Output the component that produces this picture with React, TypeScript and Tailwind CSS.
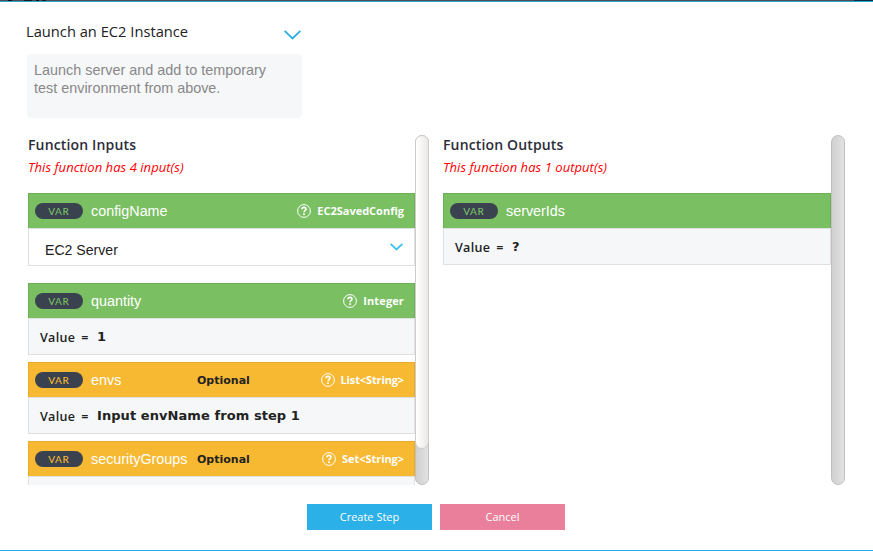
import React from "react";

const sans = "font-['Open_Sans','Noto_Sans',sans-serif]";
const helv = "font-['Liberation_Sans',Arial,sans-serif]";
const deja = "font-['DejaVu_Sans',Verdana,sans-serif]";

function HelpIcon() {
  return (
    <svg width="14" height="14" viewBox="0 0 14 14" fill="none" stroke="white" className="shrink-0">
      <circle cx="7" cy="7" r="6.4" strokeWidth="1" />
      <path d="M4.9 5.3C5 3.9 6 3.4 7 3.4C8.2 3.4 9 4.1 9 5.1C9 6.5 7 6.6 7 8.3" strokeWidth="1.6" />
      <path d="M7 9.2V10.9" strokeWidth="1.7" />
    </svg>
  );
}

function Chevron({ width, height, stroke }: { width: number; height: number; stroke: string }) {
  return (
    <svg width={width} height={height} viewBox={`0 0 ${width} ${height}`} fill="none" stroke={stroke} strokeWidth="1.8">
      <path d={`M0.6 0.8L${width / 2} ${height - 1.6}L${width - 0.6} 0.8`} />
    </svg>
  );
}

type VarProps = {
  name: string;
  type?: string;
  typeTracking?: string;
  optional?: boolean;
  children?: React.ReactNode;
};

function VarCard({ name, type, typeTracking = "", optional, children }: VarProps) {
  const header = optional ? "bg-[#f8b932] border-[#e8ab2c]" : "bg-[#7ac063] border-[#6db057]";
  const label = optional ? "text-[#f8b932]" : "text-[#7ac063]";
  return (
    <div className="shrink-0">
      <div className={`flex h-[35px] items-center border border-b-0 pl-[5.5px] pr-[10px] ${header}`}>
        <div className={`flex h-4 w-[48.5px] shrink-0 items-center justify-center rounded-full bg-[#3a414f] font-['Lato',sans-serif] text-[10px] font-medium leading-none tracking-[0.5px] ${label}`}>
          VAR
        </div>
        <div className={`ml-2 w-[106px] whitespace-nowrap text-[14.35px] leading-5 text-white ${helv}`}>{name}</div>
        {optional && <div className={`pt-[2px] text-[11px] font-bold leading-4 text-[#222] ${deja}`}>Optional</div>}
        {type && (
          <div className={`ml-auto flex items-center gap-[6px] text-[11px] font-bold text-white ${sans}`}>
            <HelpIcon />
            <span className={typeTracking}>{type}</span>
          </div>
        )}
      </div>
      {children}
    </div>
  );
}

function Value({ text }: { text: string }) {
  return (
    <div className="flex h-[37px] items-center border border-[#dfe0e2] bg-[#f5f7f9] pl-[11px] text-[#222]">
      <span className={`flex w-[57px] gap-[6px] pt-[2px] text-[12.5px] font-semibold leading-4 tracking-[0.3px] ${sans}`}>
        <span>Value</span>
        <span>=</span>
      </span>
      <span className={`text-[13px] font-bold leading-5 tracking-[0.07px] ${deja}`}>{text}</span>
    </div>
  );
}

function Heading({ title, note }: { title: string; note: string }) {
  return (
    <div className={`h-[58px] shrink-0 ${sans}`}>
      <div className="h-5 text-[14px] font-semibold leading-[19px] tracking-[0.15px] text-[#2b2d38]">{title}</div>
      <div className="mt-[3px] text-[13px] italic leading-[19px] tracking-[0.05px] text-[#ff0000]">{note}</div>
    </div>
  );
}

function Scrollbar({ thumb }: { thumb?: boolean }) {
  return (
    <div className="h-[350px] w-[14px] shrink-0 rounded-full border border-[#c3bfbc] bg-linear-to-r from-[#d0d0d0] to-[#e2e2e2]">
      {thumb && (
        <div className="-ml-px -mt-px h-[314px] w-[14px] rounded-full border border-[#cfcbc8] bg-linear-to-r from-white to-[#ebe9e7]" />
      )}
    </div>
  );
}

export default function App() {
  return (
    <div className="flex h-[551px] w-[873px] flex-col overflow-hidden border-b border-[#20b0e6] bg-white">
      <div className="flex h-[2px] shrink-0 border-b border-[#2ba5cf] bg-[#4c4c50]">
        <div className="ml-2 w-1 bg-[#111]" />
        <div className="ml-3 w-2 bg-[#1c1c1c]" />
        <div className="ml-1 w-[3px] bg-[#111]" />
        <div className="ml-[3px] w-1 bg-[#1c1c1c]" />
        <div className="ml-auto w-[19px] bg-[#082f43]" />
      </div>
      <div className="h-[133px] shrink-0 pl-[27px] pt-5">
        <div className="flex h-8 w-[275px] justify-between">
          <div className={`-ml-px text-[14.7px] leading-[18px] text-[#222] ${sans}`}>Launch an EC2 Instance</div>
          <div className="mr-[1.5px] mt-2">
            <Chevron width={17} height={10} stroke="#2bade6" />
          </div>
        </div>
        <div className={`h-[64px] w-[275px] rounded bg-[#f5f7f9] px-[7px] pt-[7px] text-[14.4px] leading-[18px] text-[#888] ${helv}`}>
          Launch server and add to temporary<br />test environment from above.
        </div>
      </div>
      <div className="flex h-[350px] shrink-0 pl-7">
        <div className="flex h-[350px] w-[387px] flex-col overflow-hidden">
          <Heading title="Function Inputs" note="This function has 4 input(s)" />
          <VarCard name="configName" type="EC2SavedConfig">
            <div className="mb-[17px] flex h-[38px] items-center justify-between border border-[#dfe0e2] bg-white pl-4 pr-[11px]">
              <div className={`pt-[5px] text-[14.1px] leading-[18px] text-[#222] ${helv}`}>EC2 Server</div>
              <Chevron width={13} height={8} stroke="#3bc3f0" />
            </div>
          </VarCard>
          <VarCard name="quantity" type="Integer" typeTracking="tracking-[0.13px]">
            <Value text="1" />
          </VarCard>
          <div className="h-[7px] shrink-0" />
          <VarCard name="envs" type="List<String>" typeTracking="tracking-[-0.13px]" optional>
            <Value text="Input envName from step 1" />
          </VarCard>
          <div className="h-[7px] shrink-0" />
          <VarCard name="securityGroups" type="Set<String>" typeTracking="tracking-[-0.06px]" optional>
            <div className="h-[9px] border border-b-0 border-[#dfe0e2] bg-[#f5f7f9]" />
          </VarCard>
        </div>
        <Scrollbar thumb />
        <div className="ml-[14px] h-[350px] w-[388px]">
          <Heading title="Function Outputs" note="This function has 1 output(s)" />
          <VarCard name="serverIds">
            <Value text="?" />
          </VarCard>
        </div>
        <Scrollbar />
      </div>
      <div className={`flex gap-2 pl-[307px] pt-[19px] text-[11px] text-white ${sans}`}>
        <button className="h-[26px] w-[125px] bg-[#2bb0e8]">Create Step</button>
        <button className="h-[26px] w-[125px] bg-[#ea7f9c]">Cancel</button>
      </div>
    </div>
  );
}
